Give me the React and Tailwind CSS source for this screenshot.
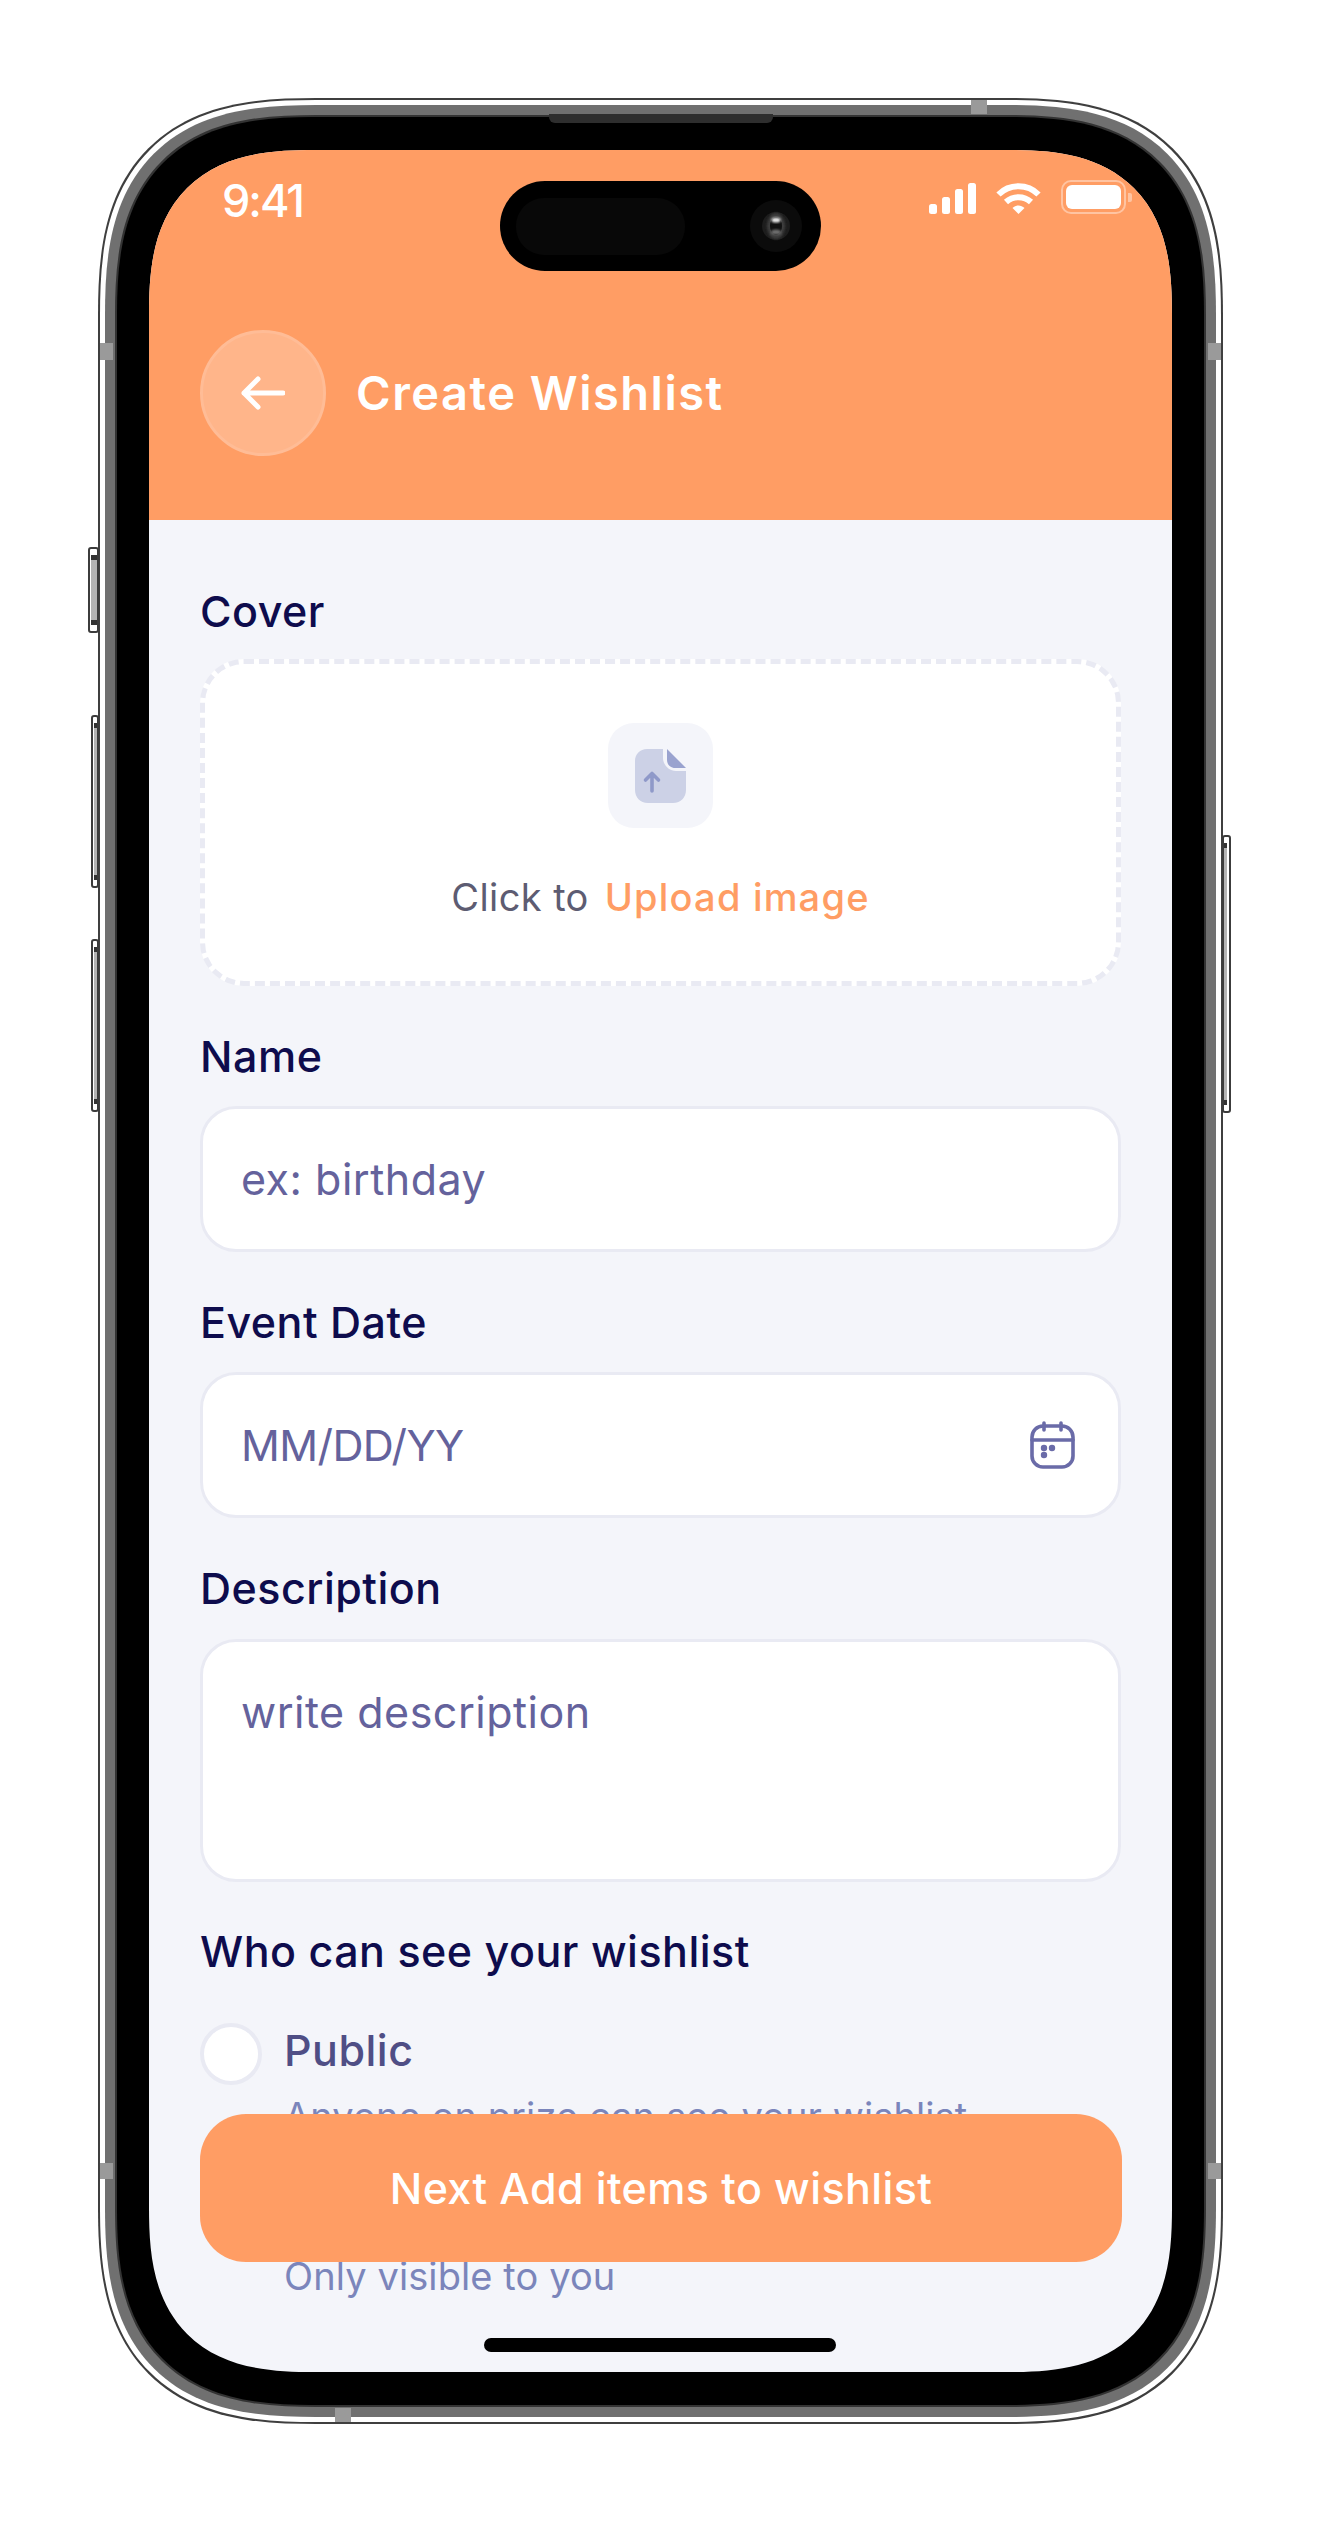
const LABEL = "text-[43px] leading-[60px] h-[60px] font-medium text-[#0e0c4d] tracking-[0.5px]";
const FIELD = "w-full bg-white border-[3px] border-[#e9eaf3] rounded-[36px] text-[43px] tracking-[0.5px] text-[#64629c]";
const SQUIRCLE = "[corner-shape:superellipse(1.4)]";

function Band({ className }) {
  return <div className={"absolute bg-[#9a9a9a] " + className} />;
}

function SideButton({ className, strip }) {
  return (
    <div className={"absolute bg-white border-2 border-[#3c3c3c] rounded-[3px] flex flex-col justify-center items-end py-[6px] " + className}>
      <div className={"flex-1 flex flex-col justify-between bg-[#b4b4b4] " + strip}>
        <div className="h-[5px] bg-[#333]" />
        <div className="h-[5px] bg-[#333]" />
      </div>
    </div>
  );
}

function Signal() {
  return (
    <svg width="47" height="31" viewBox="0 0 47 31" fill="#fff">
      <rect x="0" y="21" width="8" height="10" rx="2.5" />
      <rect x="13" y="14" width="8" height="17" rx="2.5" />
      <rect x="26" y="6" width="8" height="25" rx="2.5" />
      <rect x="39" y="0" width="8" height="31" rx="2.5" />
    </svg>
  );
}

function Wifi() {
  return (
    <svg width="45" height="31" viewBox="0 0 45 31" fill="none" stroke="#fff" strokeWidth="6">
      <path d="M2.5 11.5C13.5 0.5 31.5 0.5 42.5 11.5" />
      <path d="M10 19C17 12.5 28 12.5 35 19" />
      <path d="M16.5 25L22.5 31L28.5 25C25 21.5 20 21.5 16.5 25Z" fill="#fff" stroke="none" />
    </svg>
  );
}

function Battery() {
  return (
    <div className="flex items-center gap-[2px]">
      <div className="w-[65px] h-[34px] rounded-[10px] border-2 border-white/40 p-[3px]">
        <div className="w-full h-full bg-white rounded-[6px]" />
      </div>
      <div className="w-[4px] h-[9px] bg-white/40 rounded-r-[2px]" />
    </div>
  );
}

function FileIcon() {
  return (
    <svg width="51" height="54" viewBox="0 0 51 54">
      <path d="M12 0H28V9C28 16 34 22 41 22H51V41C51 48 46 54 38 54H13C5 54 0 48 0 41V12C0 5 5 0 12 0Z" fill="#ccd1e6" />
      <path d="M32 0L51 19H40C35.5 19 32 15.5 32 11V0Z" fill="#9aa3cf" />
      <path d="M17 42V25M10.5 31L17 24.5L23.5 31" fill="none" stroke="#8f99c9" strokeWidth="3.6" strokeLinecap="round" strokeLinejoin="round" />
    </svg>
  );
}

function Calendar() {
  return (
    <svg width="45" height="48" viewBox="0 0 45 48" fill="none" stroke="#6a6ba8" strokeWidth="3.6" strokeLinecap="round">
      <rect x="2" y="5" width="41" height="41" rx="11" />
      <path d="M2 19H43M14 2V9M31 2V9" />
      <circle cx="14" cy="27" r="1.4" fill="#6a6ba8" />
      <circle cx="22" cy="27" r="1.4" fill="#6a6ba8" />
      <circle cx="14" cy="34" r="1.4" fill="#6a6ba8" />
    </svg>
  );
}

function Camera() {
  return (
    <svg width="52" height="52" viewBox="0 0 52 52">
      <defs>
        <filter id="lensBlur"><feGaussianBlur stdDeviation="1.2" /></filter>
      </defs>
      <circle cx="26" cy="26" r="26" fill="#0b0b0b" />
      <circle cx="26" cy="26" r="14" fill="#1d1d1d" />
      <ellipse cx="26" cy="26" rx="9" ry="13" fill="#3c3c3c" filter="url(#lensBlur)" />
      <ellipse cx="26" cy="26" rx="6" ry="9" fill="#111" />
      <ellipse cx="26" cy="20" rx="4.5" ry="2.6" fill="#e8e8e8" filter="url(#lensBlur)" />
      <ellipse cx="26" cy="32" rx="5" ry="2.6" fill="#6e6e6e" filter="url(#lensBlur)" />
    </svg>
  );
}

export default function App() {
  return (
    <div className="w-[1319px] h-[2521px] bg-white pt-[98px] pl-[98px] font-['Inter',sans-serif] overflow-hidden">
      <div className="relative w-[1125px] h-[2326px]">
        <SideButton className="left-[-10px] top-[449px] w-[11px] h-[86px]" strip="w-[6px]" />
        <SideButton className="left-[-7px] top-[617px] w-[8px] h-[173px]" strip="w-[3px]" />
        <SideButton className="left-[-7px] top-[841px] w-[8px] h-[173px]" strip="w-[3px]" />
        <SideButton className="right-[-8px] top-[737px] w-[9px] h-[278px] rotate-180" strip="w-[3px]" />

        <div className={"w-full h-full bg-[#3f3f3f] rounded-[218px] p-[2px] " + SQUIRCLE}>
          <div className={"w-full h-full bg-white rounded-[216px] p-[5px] " + SQUIRCLE}>
            <div className={"w-full h-full bg-[#707070] rounded-[211px] p-[10px] " + SQUIRCLE}>
              <div className={"w-full h-full bg-black border-2 border-[#333] rounded-[201px] px-[32px] py-[33px] " + SQUIRCLE}>
                <div className={"relative w-full h-full rounded-[165px] overflow-hidden bg-[#f4f5fa] " + SQUIRCLE}>
                  <header className="h-[370px] bg-[#ff9d64]">
                    <div className="h-[180px] pl-[73px] pr-[40px] pt-[29px] flex justify-between items-start">
                      <span className="text-[45px] leading-[44px] text-white font-medium tracking-[-2px]">9:41</span>
                      <div className="flex items-start gap-[20px] pt-[1px]">
                        <div className="pt-[3px]"><Signal /></div>
                        <div className="pt-[3px]"><Wifi /></div>
                        <Battery />
                      </div>
                    </div>
                    <div className="flex items-center gap-[30px] pl-[51px]">
                      <div className="w-[126px] h-[126px] rounded-full bg-[#ffb58a] border-[3px] border-[#ffbc96] flex items-center justify-center">
                        <svg width="44" height="34" viewBox="0 0 44 34" fill="none" stroke="#fff" strokeWidth="5" strokeLinecap="round" strokeLinejoin="round">
                          <path d="M42 17H3M17 3L3 17L17 31" />
                        </svg>
                      </div>
                      <h1 className="text-[47px] font-semibold text-white leading-[60px] tracking-[1.5px]">Create Wishlist</h1>
                    </div>
                  </header>

                  <main className="px-[51px] pt-[61px]">
                    <div className={LABEL}>Cover</div>
                    <div className="mt-[18px] h-[327px] bg-white border-[5px] border-dashed border-[#e9eaf3] rounded-[44px] flex flex-col items-center">
                      <div className="mt-[59px] w-[105px] h-[105px] rounded-[26px] bg-[#f4f5fa] flex items-center justify-center">
                        <FileIcon />
                      </div>
                      <div className="mt-[41px] flex items-center gap-[16px] text-[38px] leading-[56px]">
                        <span className="text-[#5d5c72] tracking-[0.4px]">Click to</span>
                        <span className="text-[#ff9d64] font-medium tracking-[1.2px]">Upload image</span>
                      </div>
                    </div>

                    <div className={LABEL + " mt-[40px]"}>Name</div>
                    <div className={FIELD + " mt-[20px] h-[146px] px-[38px] flex items-center"}>ex: birthday</div>

                    <div className={LABEL + " mt-[40px]"}>Event Date</div>
                    <div className={FIELD + " mt-[20px] h-[146px] px-[38px] flex items-center justify-between"}>
                      <span className="tracking-[-0.6px]">MM/DD/YY</span>
                      <span className="mr-[5px]"><Calendar /></span>
                    </div>

                    <div className={LABEL + " mt-[40px]"}>Description</div>
                    <div className={FIELD + " mt-[21px] h-[243px] px-[38px] pt-[40px] leading-[60px]"}>write description</div>

                    <div className={LABEL + " mt-[39px]"}>Who can see your wishlist</div>

                    <div className="mt-[42px] flex flex-col gap-[42px]">
                      <div className="flex gap-[22px]">
                        <div className="w-[62px] h-[62px] rounded-full bg-white border-[4px] border-[#e9eaf3] shrink-0" />
                        <div>
                          <div className="text-[43px] leading-[54px] font-medium text-[#4f4e85] tracking-[0.5px]">Public</div>
                          <div className="text-[38px] leading-[50px] text-[#7b85bb] mt-[14px] tracking-[0.1px]">Anyone on prize can see your wishlist</div>
                        </div>
                      </div>
                      <div className="flex gap-[22px]">
                        <div className="w-[62px] h-[62px] rounded-full bg-white border-[4px] border-[#e9eaf3] shrink-0" />
                        <div>
                          <div className="text-[43px] leading-[54px] font-medium text-[#4f4e85] tracking-[0.5px]">Private</div>
                          <div className="text-[38px] leading-[50px] text-[#7b85bb] mt-[14px] tracking-[0.1px]">Only visible to you</div>
                        </div>
                      </div>
                    </div>
                  </main>

                  <button className="absolute left-[51px] right-[50px] bottom-[110px] h-[148px] rounded-[46px] bg-[#ff9d64] text-white text-[43px] font-medium tracking-[0.4px]">
                    Next Add items to wishlist
                  </button>
                  <div className="absolute bottom-[20px] left-[335px] w-[352px] h-[14px] rounded-full bg-black" />
                </div>
              </div>
            </div>
          </div>
        </div>

        {/* dynamic island */}
        <div className="absolute left-[402px] top-[83px] w-[321px] h-[90px] rounded-[45px] bg-black flex items-center justify-between pl-[16px] pr-[19px]">
          <div className="w-[169px] h-[57px] rounded-[28px] bg-[#080808]" />
          <Camera />
        </div>

        {/* frame details */}
        <div className="absolute left-[451px] top-[16px] w-[224px] h-[9px] bg-[#2e2e2e] rounded-b-[6px]" />
        <Band className="left-[873px] top-[2px] w-[16px] h-[14px]" />
        <Band className="left-[2px] top-[245px] w-[13px] h-[17px]" />
        <Band className="right-[2px] top-[245px] w-[13px] h-[17px]" />
        <Band className="left-[2px] top-[2065px] w-[13px] h-[16px]" />
        <Band className="right-[2px] top-[2065px] w-[13px] h-[16px]" />
        <Band className="left-[237px] bottom-[2px] w-[16px] h-[14px]" />
      </div>
    </div>
  );
}
